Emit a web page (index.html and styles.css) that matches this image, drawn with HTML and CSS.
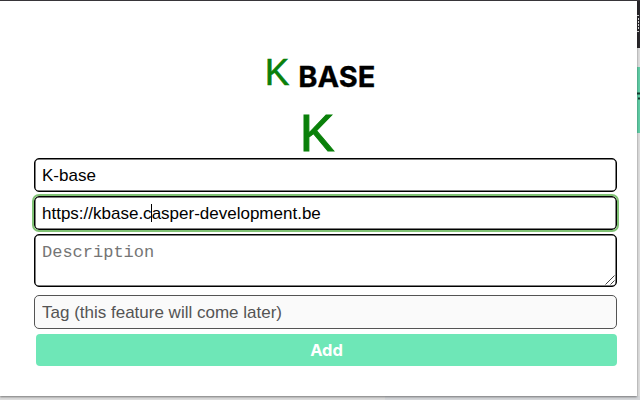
FILE: index.html
```
<!DOCTYPE html>
<html lang="en">
<head>
    <meta charset="UTF-8">
    <meta name="viewport" content="width=device-width, initial-scale=1.0">
    <title>K BASE</title>
    <link rel="stylesheet" href="styles.css">
</head>
<body>
    <div class="page">
        <div class="toolbar"></div>
        <div class="side">
            <svg class="side-top" width="3" height="47" viewBox="0 0 3 47">
                <path d="M0 14.5h3M0 30.5h3M1.5 17v12" stroke="#ddd" stroke-dasharray="2 1"/>
            </svg>
            <svg class="side-green" width="3" height="66" viewBox="0 0 3 66">
                <path d="M0 26.5h3M1 31.5h2" stroke="#173c30" stroke-width="2"/>
            </svg>
        </div>
        <div class="page-bottom"></div>
    </div>

    <div class="popup">
        <h1 class="title"><span class="letter">K</span> <span class="name">BASE</span></h1>
        <div class="favicon">K</div>
        <form class="form">
            <input class="field" type="text" value="K-base">
            <div class="field focused">https://kbase.c<span class="caret"></span>asper-development.be</div>
            <div class="field description">Description
                <svg class="grip" width="10" height="10" viewBox="0 0 10 10">
                    <path d="M0.5 9.5L9.5 0.5M5.5 9.5L9.5 5.5" stroke="#444" fill="none"/>
                </svg>
            </div>
            <input class="field tag" type="text" placeholder="Tag (this feature will come later)" disabled>
            <button class="button" type="button">Add</button>
        </form>
    </div>
</body>
</html>
```
FILE: styles.css
```
* {
    box-sizing: border-box;
}
body {
    margin: 0;
    height: 400px;
    overflow: hidden;
    font-family: "Liberation Sans", Arial, sans-serif;
}
.page {
    height: 400px;
    display: flex;
    flex-direction: column;
    align-items: flex-end;
    justify-content: space-between;
    background: #dcdcdc;
}
.toolbar {
    width: 100%;
    height: 1px;
    background: #39373b;
}
.side {
    width: 3px;
    flex: 1;
}
.side svg {
    display: block;
}
.side-top {
    background: #29272b;
}
.side-green {
    margin-top: 19px;
    background: #5fcca5;
}
.page-bottom {
    width: 255px;
    height: 4px;
    background: #d4d6d9;
}
.popup {
    position: absolute;
    top: 1px;
    left: 0;
    width: 637px;
    height: 395px;
    padding: 51px 20px 0 34px;
    background: #fff;
    box-shadow: 0 1px 2px rgba(0, 0, 0, 0.45);
}
.title {
    display: flex;
    align-items: flex-start;
    justify-content: center;
    gap: 9px;
    height: 44px;
    margin: 0;
    padding-right: 11px;
}
.letter {
    color: #0a800a;
    font-size: 37px;
    font-weight: normal;
    line-height: 42px;
    -webkit-text-stroke: 0.5px #0a800a;
}
.name {
    font-family: Inter, sans-serif;
    font-size: 29px;
    font-weight: bold;
    line-height: 50px;
    -webkit-text-stroke: 0.3px #000;
}
.favicon {
    height: 62px;
    padding-right: 17px;
    color: #0a800a;
    font-size: 52px;
    line-height: 74px;
    text-align: center;
    -webkit-text-stroke: 1px #0a800a;
}
.form {
    display: flex;
    flex-direction: column;
    gap: 4px;
}
.field {
    width: 100%;
    height: 34px;
    margin: 0;
    padding: 1px 7px 0;
    border: 1px solid #000;
    border-radius: 5px;
    box-shadow: inset 0 0 0 0.5px #000;
    background: #fff;
    color: #000;
    font-family: "Liberation Sans", Arial, sans-serif;
    font-size: 17px;
    line-height: 32px;
}
.focused {
    outline: 2px solid #80c274;
}
.caret {
    display: inline-block;
    width: 1px;
    height: 18px;
    margin: 0 0 0 -1px;
    background: #000;
    vertical-align: -3px;
}
.description {
    position: relative;
    height: 53px;
    color: #757575;
    font-family: "Liberation Mono", "Courier New", monospace;
    line-height: 34px;
}
.grip {
    position: absolute;
    right: 1px;
    bottom: 1px;
}
.tag {
    margin-top: 4px;
    border-color: #545454;
    box-shadow: none;
    background: #fafafa;
}
.tag::placeholder {
    color: #545454;
}
.button {
    height: 32px;
    margin: 1px 0 0 2px;
    padding: 0;
    border: none;
    border-radius: 4px;
    background: #6ee7b7;
    color: #fff;
    font-family: Inter, sans-serif;
    font-size: 16.5px;
    font-weight: bold;
}
```
